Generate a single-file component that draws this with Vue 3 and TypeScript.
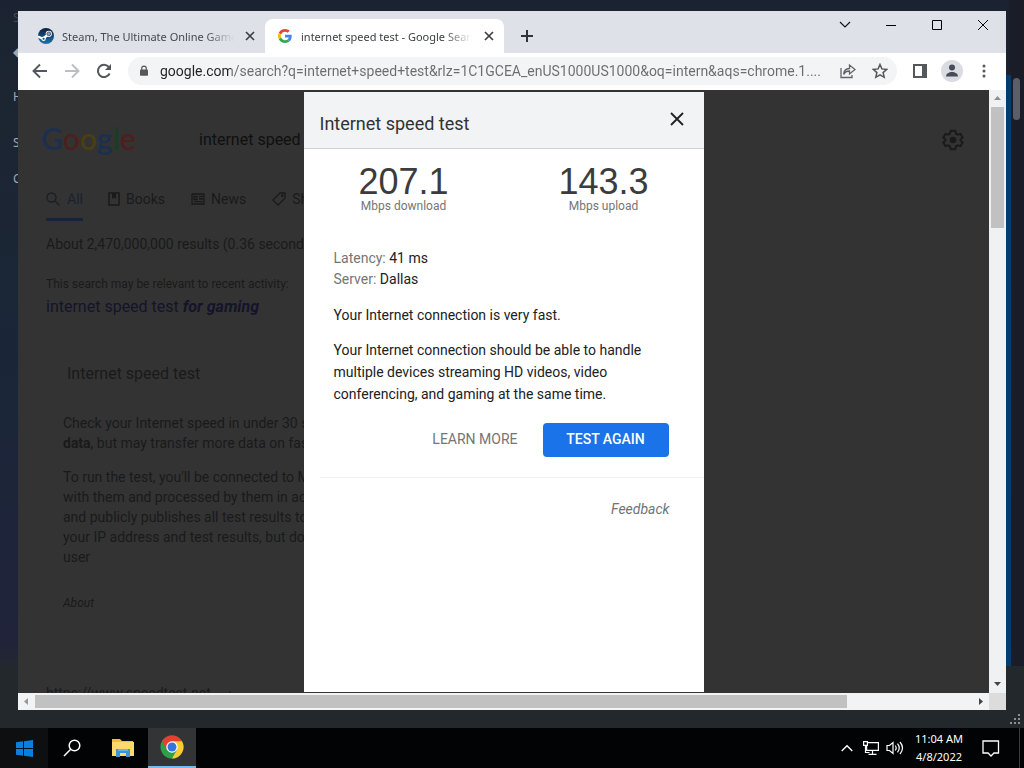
<script setup lang="ts">
import { ref } from 'vue'

interface Tab { id: string; title: string; active: boolean }

const tabs: Tab[] = [
  { id: 'steam', title: 'Steam, The Ultimate Online Game Platform', active: false },
  { id: 'google', title: 'internet speed test - Google Search', active: true },
]
const address = ref('google.com/search?q=internet+speed+test&rlz=1C1GCEA_enUS1000US1000&oq=intern&aqs=chrome.1....')
const query = ref('internet speed test')
const metrics = [
  { value: '207.1', label: 'Mbps download' },
  { value: '143.3', label: 'Mbps upload' },
]
const logo = [
  { ch: 'G', tone: 'blue' }, { ch: 'o', tone: 'red' }, { ch: 'o', tone: 'yellow' },
  { ch: 'g', tone: 'blue' }, { ch: 'l', tone: 'green' }, { ch: 'e', tone: 'red' },
]
</script>

<template>
  <div class="desktop">
    <div class="wallpaper">
      <div class="client" aria-hidden="true">
        <span class="client-blue"></span>
        <span class="client-thumb"></span>
        <span class="client-foot"></span>
        <div class="client-side">
          <span class="faint">S</span><span>◆</span><span>H</span><span>S</span><span>C</span>
        </div>
        <svg class="grip" width="12" height="12" viewBox="0 0 12 12" fill="#8b9095"><path d="M8 0h2v2H8zM4 4h2v2H4zM8 4h2v2H8zM0 8h2v2H0zM4 8h2v2H4zM8 8h2v2H8z" /></svg>
      </div>

      <main class="browser">
        <header class="tabstrip">
          <div v-for="tab in tabs" :key="tab.id" class="tab" :class="{ active: tab.active }">
            <svg v-if="tab.id === 'steam'" width="16" height="16" viewBox="0 0 16 16">
              <defs><linearGradient id="st" x1="0" y1="0" x2="0" y2="1"><stop offset="0" stop-color="#111d3a" /><stop offset="1" stop-color="#1976b0" /></linearGradient></defs>
              <circle cx="8" cy="8" r="8" fill="url(#st)" />
              <path d="M0 8.500 5 10.800 10.500 6" fill="none" stroke="#fff" stroke-width="2.400" />
              <circle cx="10.800" cy="5.800" r="3.100" fill="#fff" /><circle cx="10.800" cy="5.800" r="1.900" fill="#8ea3bd" stroke="#17335c" stroke-width=".7" />
              <circle cx="5.600" cy="10.800" r="2.200" fill="#fff" /><circle cx="5.600" cy="10.800" r="1.100" fill="#1a5b91" />
            </svg>
            <svg v-else width="14" height="14" viewBox="0 0 48 48">
              <path fill="#EA4335" d="M24 9.5c3.54 0 6.71 1.22 9.21 3.6l6.85-6.85C35.9 2.38 30.47 0 24 0 14.62 0 6.51 5.38 2.56 13.22l7.98 6.19C12.43 13.72 17.74 9.5 24 9.5z" />
              <path fill="#4285F4" d="M46.98 24.55c0-1.57-.15-3.09-.38-4.55H24v9.02h12.94c-.58 2.96-2.26 5.48-4.78 7.18l7.73 6c4.51-4.18 7.09-10.36 7.09-17.65z" />
              <path fill="#FBBC05" d="M10.53 28.59c-.48-1.45-.76-2.99-.76-4.59s.27-3.14.76-4.59l-7.98-6.19C.92 16.46 0 20.12 0 24c0 3.88.92 7.54 2.56 10.78l7.97-6.19z" />
              <path fill="#34A853" d="M24 48c6.48 0 11.93-2.13 15.89-5.81l-7.73-6c-2.15 1.45-4.92 2.3-8.16 2.3-6.26 0-11.57-4.22-13.47-9.91l-7.98 6.19C6.51 42.62 14.62 48 24 48z" />
            </svg>
            <span class="tab-title">{{ tab.title }}</span>
            <button class="tab-close" :aria-label="'Close ' + tab.id"><svg width="10" height="10" viewBox="0 0 10 10"><path d="M1 1l8 8M9 1 1 9" stroke="#3c4043" stroke-width="1.7" /></svg></button>
          </div>
          <button class="new-tab" aria-label="New tab"><svg width="12" height="12" viewBox="0 0 12 12"><path d="M6 0v12M0 6h12" stroke="#303338" stroke-width="2" /></svg></button>
          <div class="controls">
            <button aria-label="Search tabs"><svg width="12" height="12" viewBox="0 0 12 12"><path d="m1 3 5 5 5-5" fill="none" stroke="#111" stroke-width="1.1" /></svg></button>
            <button aria-label="Minimize"><svg width="10" height="10" viewBox="0 0 10 10"><path d="M0 5.5h10" stroke="#000" /></svg></button>
            <button aria-label="Maximize"><svg width="10" height="10" viewBox="0 0 10 10"><path d="M.5.5h9v9h-9z" fill="none" stroke="#000" /></svg></button>
            <button aria-label="Close"><svg width="12" height="12" viewBox="0 0 12 12"><path d="m1 1 10 10M11 1 1 11" stroke="#000" /></svg></button>
          </div>
        </header>

        <div class="toolbar">
          <button aria-label="Back"><svg width="16" height="16" viewBox="0 0 16 16"><path d="M15 8H2M8 1.5 1.5 8 8 14.5" fill="none" stroke="#54585c" stroke-width="1.9" /></svg></button>
          <button aria-label="Forward"><svg width="16" height="16" viewBox="0 0 16 16"><path d="M1 8h13M8 1.5 14.500 8 8 14.500" fill="none" stroke="#bcbec1" stroke-width="1.9" /></svg></button>
          <button aria-label="Reload"><svg width="16" height="16" viewBox="0 0 16 16"><path d="M13.600 10.500A6.100 6.100 0 1 1 12.700 4" fill="none" stroke="#54585c" stroke-width="2" /><path d="M15 1v6H9z" fill="#54585c" /></svg></button>
          <div class="omnibox">
            <svg width="8" height="12" viewBox="0 0 10 14"><path d="M2.200 6V3.600a2.800 2.800 0 0 1 5.600 0V6" fill="none" stroke="#54585c" stroke-width="1.500" /><rect y="5" width="10" height="8" rx="1" fill="#54585c" /></svg>
            <input v-model="address" aria-label="Address and search bar" type="text" />
            <button aria-label="Share"><svg width="16" height="16" viewBox="0 0 16 16" fill="none" stroke="#5f6368" stroke-width="1.300"><path d="M1 5v9.500h11V12M9.500 5.500V2L15 6.500 9.500 11V8C6.500 8 4.800 9 3.800 11.500 3.800 8 5.500 5.600 9.500 5.500z" /></svg></button>
            <button aria-label="Bookmark"><svg width="16" height="16" viewBox="0 0 16 16"><path d="m8 1.500 1.900 4.400 4.900.5-3.700 3.200 1.100 4.700L8 11.800l-4.200 2.500 1.100-4.700L1.200 6.400l4.900-.5z" fill="none" stroke="#54585c" stroke-width="1.500" /></svg></button>
          </div>
          <button aria-label="Side panel"><svg width="14" height="14" viewBox="0 0 14 14"><path d="M1 1h12v12H1z" fill="#fff" stroke="#54585c" stroke-width="2" /><path d="M9 1h4v12H9z" fill="#54585c" /></svg></button>
          <button aria-label="Profile"><svg width="22" height="22" viewBox="0 0 22 22"><circle cx="11" cy="11" r="11" fill="#dadce3" /><circle cx="11" cy="7.500" r="3" fill="#474c56" /><path d="M5 16.500c0-3 3-4.500 6-4.500s6 1.500 6 4.500z" fill="#474c56" /></svg></button>
          <button aria-label="Menu"><svg width="4" height="14" viewBox="0 0 4 14" fill="#54585c"><circle cx="2" cy="2" r="1.500" /><circle cx="2" cy="7" r="1.500" /><circle cx="2" cy="12" r="1.500" /></svg></button>
        </div>

        <div class="viewport">
          <section class="page">
            <div class="search-row">
              <a class="logo" href="#" aria-label="Google"><span v-for="(l, i) in logo" :key="i" :class="l.tone">{{ l.ch }}</span></a>
              <input v-model="query" class="query" aria-label="Search" type="text" />
              <button class="gear" aria-label="Settings"><svg width="22" height="22" viewBox="0 0 24 24" fill="none" stroke="#1a1a1a" stroke-width="2.200"><path d="m9.500 2-.7 3L6.700 6.200 3.800 5.300 1.500 9.300 3.700 11.300v1.400l-2.200 2 2.300 4 2.900-.9L8.800 19l.7 3h5l.7-3 2.100-1.200 2.900.9 2.300-4-2.200-2v-1.400l2.200-2-2.300-4-2.900.9L15.200 5l-.7-3z" /><circle cx="12" cy="12" r="2.500" fill="#1a1a1a" /></svg></button>
            </div>
            <nav class="kinds">
              <a href="#" class="current"><svg width="14" height="14" viewBox="0 0 14 14" fill="none" stroke="#1b1e22" stroke-width="1.300"><circle cx="5.500" cy="5.500" r="4.500" /><path d="m9 9 4.500 4.500" /></svg>All</a>
              <a href="#"><svg width="12" height="14" viewBox="0 0 12 14" fill="none" stroke="#1a1a1a" stroke-width="1.500"><path d="M1 1h10v12H1z" /><path d="M4 1h4v6L6 5.500 4 7z" fill="#1a1a1a" stroke="none" /></svg>Books</a>
              <a href="#"><svg width="14" height="12" viewBox="0 0 14 12" fill="none" stroke="#1a1a1a" stroke-width="1.300"><path d="M1 1h12v10H1zM3 3.500h3v3H3zM8 3.500h4M8 6h4M3 8.700h9" /></svg>News</a>
              <a href="#"><svg width="14" height="14" viewBox="0 0 14 14" fill="none" stroke="#1a1a1a" stroke-width="1.300"><path d="M8 1h5v5l-7 7-5-5z" /><circle cx="10.300" cy="3.700" r=".7" /></svg>Shopping</a>
            </nav>
            <p class="stats">About 2,470,000,000 results (0.36 seconds)</p>
            <p class="hint">This search may be relevant to recent activity:</p>
            <a class="related" href="#">internet speed test <b>for gaming</b></a>
            <article class="card">
              <h2>Internet speed test</h2>
              <p>Check your Internet speed in under 30 seconds. The test usually transfers less than 40 MB of<br /><b>data</b>, but may transfer more data on fast connections.</p>
              <p>To run the test, you'll be connected to Measurement Lab (M-Lab) and your IP address shared<br />with them and processed by them in accordance with their privacy policy. M-Lab<br />and publicly publishes all test results to promote Internet research. Data has<br />your IP address and test results, but doesn't include any other information about you as a<br />user</p>
              <a class="about" href="#">About</a>
            </article>
            <cite>https://www.speedtest.net &nbsp; &nbsp; ›</cite>
          </section>

          <section class="dialog" role="dialog" aria-labelledby="dlg">
            <header class="dialog-head">
              <h1 id="dlg">Internet speed test</h1>
              <button aria-label="Close dialog"><svg width="14" height="14" viewBox="0 0 14 14"><path d="m1 1 12 12M13 1 1 13" stroke="#202124" stroke-width="1.800" /></svg></button>
            </header>
            <div class="metrics">
              <div v-for="m in metrics" :key="m.label" class="metric"><strong>{{ m.value }}</strong><span>{{ m.label }}</span></div>
            </div>
            <div class="details">
              <p class="facts"><span>Latency:</span> 41 ms<br /><span>Server:</span> Dallas</p>
              <p>Your Internet connection is very fast.</p>
              <p>Your Internet connection should be able to handle multiple devices streaming HD videos, video conferencing, and gaming at the same time.</p>
              <div class="actions">
                <button class="learn">LEARN MORE</button>
                <button class="again">TEST AGAIN</button>
              </div>
            </div>
            <footer><a href="#">Feedback</a></footer>
          </section>
        </div>

        <div class="vbar" aria-hidden="true">
          <svg width="17" height="17" viewBox="0 0 17 17"><path d="m5 10 3.500-4 3.500 4z" fill="#8f8f8f" /></svg>
          <span class="vthumb"></span>
          <svg width="17" height="17" viewBox="0 0 17 17"><path d="m5 6 3.500 4L12 6z" fill="#454545" /></svg>
        </div>
        <div class="hbar" aria-hidden="true">
          <svg width="17" height="17" viewBox="0 0 17 17"><path d="m10 5-4 3.500 4 3.500z" fill="#9a9a9a" /></svg>
          <span class="htrack"><span class="hthumb"></span></span>
          <svg width="17" height="17" viewBox="0 0 17 17"><path d="m7 5 4 3.500L7 12z" fill="#454545" /></svg>
        </div>
        <div class="corner"></div>
      </main>
    </div>

    <footer class="taskbar">
      <button class="start" aria-label="Start"><svg width="17" height="17" viewBox="0 0 17 17" fill="#0b7fe0"><path d="M0 2.300 7 1.300V8H0zM8 1.200 17 0v8H8zM0 9h7v6.700l-7-1zM8 9h9v8l-9-1.200z" /></svg></button>
      <button aria-label="Search"><svg width="18" height="18" viewBox="0 0 18 18" fill="none" stroke="#fff" stroke-width="1.500"><circle cx="11.500" cy="6.500" r="5.300" /><path d="M7.700 10.300 1 17" /></svg></button>
      <button class="files" aria-label="File Explorer"><svg width="22" height="18" viewBox="0 0 22 18"><path d="M0 0h8l2 2h11v15H0z" fill="#f3bd3a" /><path d="M0 3h22v14H0z" fill="#ffd96b" /><path d="M4 18v-8h14v8h-4v-4H8v4z" fill="#3f93cf" /><path d="M6 10h10v2H6z" fill="#69b3e5" /></svg></button>
      <button class="running" aria-label="Google Chrome"><svg width="24" height="24" viewBox="0 0 24 24"><circle cx="12" cy="12" r="11.500" fill="#2da04b" /><path d="M12 12 2.040 6.250A11.500 11.500 0 0 1 21.960 6.250H12z" fill="#e34033" /><path d="M2.040 6.250 7.020 14.880 12 12 12 6.250z" fill="#e34033" /><path d="M21.960 6.250A11.500 11.500 0 0 1 12 23.500L16.980 14.880 12 6.250z" fill="#fccb2f" /><circle cx="12" cy="12" r="5.750" fill="#fff" /><circle cx="12" cy="12" r="4.500" fill="#3374e0" /></svg></button>
      <div class="tray">
        <button aria-label="Show hidden icons"><svg width="12" height="8" viewBox="0 0 12 8"><path d="m.7 7 5.300-5.300L11.300 7" fill="none" stroke="#fff" stroke-width="1.400" /></svg></button>
        <button aria-label="Network"><svg width="18" height="16" viewBox="0 0 18 16" fill="none" stroke="#fff" stroke-width="1.200"><path d="M5 2.600h11.400v7.800H4.600V6M10.500 10.400v3.600M6.500 14.400h8M1.600 1.600h3.800v3.800H1.600zM3.500 5.500v7h4" /></svg></button>
        <button aria-label="Volume"><svg width="18" height="16" viewBox="0 0 18 16" fill="none" stroke="#fff" stroke-width="1.200"><path d="M1 5.500h2.500L7 2.500v11l-3.500-3H1zM9.200 5.500q2 2.500 0 5M11.500 3.700q3.500 4.300 0 8.600M14 2q5 6 0 12" /></svg></button>
        <time class="clock"><span>11:04 AM</span><span>4/8/2022</span></time>
        <button class="notes" aria-label="Notifications"><svg width="18" height="17" viewBox="0 0 18 17"><path d="M1 1h15.500v12H12l-3 3-3-3H1z" fill="none" stroke="#fff" stroke-width="1.300" /></svg></button>
        <span class="peek"></span>
      </div>
    </footer>
  </div>
</template>

<style scoped>
* { box-sizing: border-box; }
.desktop { display: flex; flex-direction: column; height: 100vh; overflow: hidden; font-family: "Noto Sans", "Open Sans", sans-serif; }
button { border: 0; padding: 0; background: none; display: flex; align-items: center; justify-content: center; font: inherit; color: inherit; flex: none; }
a { text-decoration: none; color: inherit; }
p, h1, h2 { margin: 0; font-weight: 400; }
svg { display: block; flex: none; }
input { border: 0; outline: 0; padding: 0; min-width: 0; background: none; }

.wallpaper { position: relative; flex: 1; min-height: 0; padding: 11px 18px 18px; background: linear-gradient(#1b2332 0, #1c2531 12%, #1a2638 50%, #20233a 88%, #23282e 92%); }
.client { position: absolute; inset: 0; background: linear-gradient(90deg, transparent calc(100% - 18px), #1a1d28 calc(100% - 12px)); }
.client-blue { position: absolute; right: 13px; top: 75px; bottom: 62px; width: 5px; background: #063b6c; }
.client-thumb { position: absolute; right: 4px; top: 78px; width: 7px; height: 42px; border-radius: 4px; background: #5c5e67; }
.client-foot { position: absolute; left: 0; right: 0; bottom: 0; height: 62px; background: #22282c; }
.client-side { position: absolute; left: 13px; top: 10px; display: grid; grid-template-rows: 24px 55px 46px 36px 34px; font: 12px/16px "Noto Sans", sans-serif; color: #a4a6a9; }
.client-side .faint { color: #47494d; }
.client-side span:nth-child(2) { padding-top: 10px; }
.grip { position: absolute; right: 2px; bottom: 2px; }

.browser { position: relative; height: 100%; display: grid; grid-template-columns: minmax(0, 1fr) 17px; grid-template-rows: 42px 37px minmax(0, 1fr) 17px; background: #fff; }
.tabstrip { grid-column: 1 / -1; display: flex; align-items: flex-end; padding-left: 8px; background: #dee1e7; }
.tab { display: flex; align-items: center; width: 239px; height: 34px; padding: 0 7px 0 12px; gap: 8px; border-radius: 8px 8px 0 0; font-size: 11px; color: #45484d; }
.tab.active { padding-left: 13px; gap: 9px; background: #fff; color: #3c4043; }
.tab-title { flex: 1; overflow: hidden; white-space: nowrap; mask-image: linear-gradient(90deg, #000 calc(100% - 28px), transparent); }
.tab-close { width: 16px; height: 16px; }
.new-tab { width: 28px; height: 34px; margin-left: 9px; }
.controls { display: flex; margin-left: auto; align-self: flex-start; }
.controls button { width: 46px; height: 28px; }

.toolbar { grid-column: 1 / -1; display: flex; align-items: center; padding: 0 6px 2px; background: #fff; }
.toolbar > button { width: 32px; height: 32px; }
.omnibox { flex: 1; display: flex; align-items: center; height: 28px; margin: 0 7px 0 8px; padding: 0 1px 0 12px; border-radius: 14px; background: #f3f4f5; }
.omnibox input { flex: 1; margin-left: 12px; font: 14px/20px Roboto, "Open Sans", sans-serif; color: transparent; background: linear-gradient(90deg, #202124 71px, #696c70 71px); background-clip: text; }
.omnibox button { width: 32px; height: 28px; }

.viewport { position: relative; min-width: 0; min-height: 0; overflow: hidden; background: #333; font-family: Roboto, sans-serif; }
.page { padding: 28px 25px 0 28px; color: #1a1a1a; font-size: 14px; line-height: 20px; white-space: nowrap; }
.search-row { display: flex; align-items: center; height: 44px; margin-left: -5px; }
.logo { width: 158px; padding-bottom: 4px; font: 30px/40px Lato, sans-serif; font-weight: 600; }
.blue { color: #1c2f4f; } .red { color: #4d1f1d; } .yellow { color: #4b3d14; } .green { color: #1c3d25; }
.query { flex: 1; font: 16px/24px Roboto, sans-serif; color: #101010; }
.gear { width: 22px; height: 22px; }
.kinds { display: flex; gap: 24px; height: 59px; padding-top: 17px; }
.kinds a { display: flex; align-items: center; gap: 6px; height: 42px; padding: 0 1px; border-bottom: 3px solid transparent; }
.kinds .current { color: #1a2230; border-color: #172438; gap: 7px; padding: 0; }
.stats { margin-top: 13px; }
.hint { margin-top: 20px; font-size: 12px; }
.related { display: block; padding-top: 1px; font-size: 16px; line-height: 24px; color: #14142a; }
.related b { font-style: italic; }
.card { padding: 45px 17px 0; }
.card h2 { margin: 0 4px 29px; font-size: 16px; line-height: 20px; }
.card p { margin-bottom: 14px; }
.about { display: block; margin-top: 26px; font-size: 12px; font-style: italic; }
cite { display: block; margin-top: 70px; font-style: normal; }

.dialog { position: absolute; top: 2px; bottom: 1px; left: 50%; width: 400px; margin-left: -200px; background: #fff; color: #202124; font-size: 14px; line-height: 22px; }
.dialog-head { display: flex; align-items: center; justify-content: space-between; height: 57px; padding: 0 20px 2px 16px; background: #f1f3f4; border-bottom: 1px solid #cfd1d3; }
.dialog-head h1 { padding-top: 10px; font-size: 18px; line-height: 24px; color: #303236; }
.metrics { display: grid; grid-template-columns: 1fr 1fr; padding: 15px 0 17px; }
.metric { display: flex; flex-direction: column; align-items: center; }
.metric strong { font: 36px/36px "Liberation Sans", Arial, sans-serif; color: #3c3c3c; }
.metric span { font-size: 12px; line-height: 12px; color: #757575; }
.details { padding: 19px 35px 20px 30px; }
.details p { margin-bottom: 13px; }
.details .facts { margin-bottom: 14px; line-height: 21px; }
.facts span { color: #757575; }
.actions { display: flex; justify-content: flex-end; align-items: center; gap: 25px; padding-top: 5px; }
.actions button { height: 34px; padding-bottom: 2px; }
.learn { color: #757575; }
.again { width: 126px; border-radius: 4px; background: #1a73e8; color: #fff; font-weight: 500; }
.dialog footer { margin-left: 16px; padding: 20px 34px 0; border-top: 1px solid #f0f0f0; text-align: right; font-style: italic; color: #70757a; }

.vbar { display: flex; flex-direction: column; background: #f0f1f2; }
.vthumb { height: 20%; margin: 0 2px; background: #c1c1c1; }
.vbar svg:last-child { margin-top: auto; }
.hbar { display: flex; background: #f1f3f5; }
.htrack { flex: 1; padding: 2px 0; }
.hthumb { display: block; width: 86.700%; height: 13px; background: #c1c1c1; }
.corner { background: #dcdcdc; }

.taskbar { flex: none; display: flex; height: 40px; background: #020304; color: #fff; }
.taskbar > button { width: 48px; }
.taskbar .start { background: #0d0f10; }
.taskbar .files { width: 52px; padding-left: 2px; }
.taskbar .running { background: #333436; border-bottom: 2px solid #76b9ed; }
.tray { display: flex; align-items: center; margin-left: auto; }
.tray button { width: 24px; height: 40px; }
.clock { display: flex; flex-direction: column; width: 64px; text-align: center; font-size: 11px; line-height: 18px; }
.tray .notes { width: 48px; padding-right: 8px; }
.peek { width: 5px; height: 40px; border-left: 1px solid #3b3d40; }
</style>

<style>
body { margin: 0; background: #1b2332; }
</style>
